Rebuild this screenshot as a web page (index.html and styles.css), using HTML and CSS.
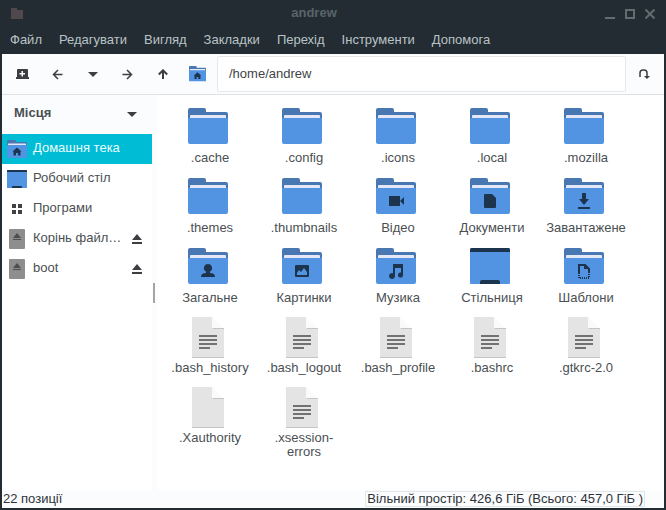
FILE: index.html
```html
<!DOCTYPE html>
<html lang="uk">
<head>
<meta charset="utf-8">
<title>andrew</title>
<link rel="stylesheet" href="styles.css">
</head>
<body>
<svg class="defs" aria-hidden="true">
  <symbol id="folder" viewBox="0 0 40 42">
    <path fill="#4877b1" d="M0 14V4a2 2 0 0 1 2-2h14a2 2 0 0 1 2 2v2h20a2 2 0 0 1 2 2v8H0z"/>
    <path fill="#e4e8f6" d="M2 18v-8a1 1 0 0 1 1-1h34a1 1 0 0 1 1 1v8z"/>
    <path fill="#5294e2" d="M0 12h40v24a2 2 0 0 1-2 2H2a2 2 0 0 1-2-2z"/>
  </symbol>
  <symbol id="desktop" viewBox="0 0 40 42">
    <rect y="2" width="40" height="36" rx="1" fill="#5294e2"/>
    <path fill="#1d344f" d="M0 6V4a2 2 0 0 1 2-2h36a2 2 0 0 1 2 2v2zM10 38v-2a2 2 0 0 1 2-2h16a2 2 0 0 1 2 2v2z"/>
  </symbol>
  <symbol id="file" viewBox="0 0 40 42">
    <path fill="#e4e4e4" d="M4 1h20v12h12v28H4z"/>
    <path fill="#fafafa" d="M24 1l12 12H24z"/>
    <path fill="#c4c4c4" d="M24 12h12v1H25zM4 41h32v1H4z"/>
  </symbol>
  <symbol id="text" viewBox="0 0 40 42">
    <use href="#file" width="40" height="42"/>
    <path fill="#727272" d="M11 19h18v2H11zM11 23h18v2H11zM11 27h18v2H11zM11 31h11v2H11z"/>
  </symbol>
  <symbol id="drive" viewBox="0 0 16 20">
    <rect width="16" height="20" rx="1" fill="#8e8e8e"/>
    <path fill="#4d4d4d" d="M8 4l4 5H4zM4 10h8v1H4z"/>
  </symbol>
  <symbol id="eject" viewBox="0 0 10 10">
    <path d="M5 0l5 6H0zM0 8h10v2H0z"/>
  </symbol>
  <symbol id="caret" viewBox="0 0 10 5"><path d="M0 0h10L5 5z"/></symbol>
  <symbol id="home" viewBox="0 0 40 42">
    <use href="#folder" width="40" height="42"/>
    <path fill="#1d344f" d="M20 17l9 8h-2v8h-5v-5h-4v5h-5v-8h-2z"/>
  </symbol>
</svg>
<div class="window">
  <header class="titlebar">
    <svg class="app-icon" viewBox="0 0 12 11"><path d="M0 1V0h6v2h6v9H0z"/></svg>
    <h1>andrew</h1>
    <div class="controls">
      <button aria-label="Згорнути"><svg viewBox="0 0 10 10"><path d="M0 9h10"/></svg></button>
      <button aria-label="Розгорнути"><svg viewBox="0 0 10 10"><path d="M1 1h8v8H1z"/></svg></button>
      <button aria-label="Закрити"><svg viewBox="0 0 10 10"><path d="M.5.5l9 9M9.500.5l-9 9"/></svg></button>
    </div>
  </header>
  <nav class="menubar">
    <button>Файл</button><button>Редагувати</button><button>Вигляд</button><button>Закладки</button><button>Перехід</button><button>Інструменти</button><button>Допомога</button>
  </nav>
  <main class="body">
    <div class="toolbar">
      <button aria-label="Нова вкладка"><svg width="13" height="10" viewBox="0 0 13 10"><path fill-rule="evenodd" d="M1 1q0-1 1-1h9q1 0 1 1v7h1v2H0V8h1zM5.500 2v2h-2v1.500h2v2H7v-2h2V4H7V2z"/></svg></button>
      <button aria-label="Назад"><svg class="line" width="11" height="11" viewBox="0 0 11 11"><path d="M10.500 5.500H1.500M6 1L1.500 5.500 6 10"/></svg></button>
      <button aria-label="Історія"><svg width="10" height="5"><use href="#caret"/></svg></button>
      <button aria-label="Вперед"><svg class="line" width="11" height="11" viewBox="0 0 11 11"><path d="M.5 5.500h9M5 1l4.500 4.500L5 10"/></svg></button>
      <button aria-label="Вгору"><svg class="line up" width="10" height="10" viewBox="0 0 10 10"><path d="M5 10V1.500M.8 5.500L5 1.300l4.200 4.200"/></svg></button>
      <button aria-label="Домашня тека"><svg width="17" height="18"><use href="#home"/></svg></button>
      <input type="text" value="/home/andrew" aria-label="Шлях">
      <button aria-label="Перейти"><svg class="line" width="12" height="12" viewBox="0 0 12 12"><path d="M2 9V5a3 3 0 0 1 3-3h1a3 3 0 0 1 3 3v4"/><path class="tip" d="M6 8h6l-3 3z"/></svg></button>
    </div>
    <div class="panes">
      <aside class="sidebar">
        <button class="places"><span>Місця</span><svg width="10" height="5"><use href="#caret"/></svg></button>
        <ul>
          <li class="selected"><svg class="icon" width="20" height="21"><use href="#home"/></svg><a href="#">Домашня тека</a></li>
          <li><svg class="icon" width="20" height="21"><use href="#desktop"/></svg><a href="#">Робочий стіл</a></li>
          <li><svg class="icon" width="20" height="20" viewBox="0 0 20 20"><path fill="#424242" d="M5 5h4v4H5zM11 5h4v4h-4zM5 11h4v4H5zM11 11h4v4h-4z"/></svg><a href="#">Програми</a></li>
          <li><svg class="icon" width="20" height="20"><use href="#drive"/></svg><a href="#">Корінь файл…</a><button aria-label="Вийняти"><svg width="10" height="10"><use href="#eject"/></svg></button></li>
          <li><svg class="icon" width="20" height="20"><use href="#drive"/></svg><a href="#">boot</a><button aria-label="Вийняти"><svg width="10" height="10"><use href="#eject"/></svg></button></li>
        </ul>
      </aside>
      <div class="splitter"><span></span></div>
      <section class="files">
        <a href="#"><svg viewBox="0 0 40 42"><use href="#folder"/></svg><span>.cache</span></a>
        <a href="#"><svg viewBox="0 0 40 42"><use href="#folder"/></svg><span>.config</span></a>
        <a href="#"><svg viewBox="0 0 40 42"><use href="#folder"/></svg><span>.icons</span></a>
        <a href="#"><svg viewBox="0 0 40 42"><use href="#folder"/></svg><span>.local</span></a>
        <a href="#"><svg viewBox="0 0 40 42"><use href="#folder"/></svg><span>.mozilla</span></a>
        <a href="#"><svg viewBox="0 0 40 42"><use href="#folder"/></svg><span>.themes</span></a>
        <a href="#"><svg viewBox="0 0 40 42"><use href="#folder"/></svg><span>.thumbnails</span></a>
        <a href="#"><svg viewBox="0 0 40 42"><use href="#folder"/><path class="mark" d="M13 20h11v10H13zM24 25l4-4v8z"/></svg><span>Відео</span></a>
        <a href="#"><svg viewBox="0 0 40 42"><use href="#folder"/><path class="mark" d="M15 18h7l4 4v9a1 1 0 0 1-1 1H15a1 1 0 0 1-1-1V19a1 1 0 0 1 1-1z"/></svg><span>Документи</span></a>
        <a href="#"><svg viewBox="0 0 40 42"><use href="#folder"/><path class="mark" d="M18 17h4v6h3l-5 6-5-6h3zM14 31h12v2H14z"/></svg><span>Завантажене</span></a>
        <a href="#"><svg viewBox="0 0 40 42"><use href="#folder"/><path class="mark" d="M20 18a4 4 0 0 1 2 7.500V27q5 0 5 4H13q0-4 5-4v-1.500A4 4 0 0 1 20 18z"/></svg><span>Загальне</span></a>
        <a href="#"><svg viewBox="0 0 40 42"><use href="#folder"/><path class="mark" fill-rule="evenodd" d="M14 19h12a1 1 0 0 1 1 1v10a1 1 0 0 1-1 1H14a1 1 0 0 1-1-1V20a1 1 0 0 1 1-1zM15 29h10v-3l-3-4-3 4-2-2-2 3z"/></svg><span>Картинки</span></a>
        <a href="#"><svg viewBox="0 0 40 42"><use href="#folder"/><path class="mark" d="M17 18h10v11a2.500 2.500 0 1 1-2-2.400V22h-6v8a3 3 0 1 1-2-2.800z"/></svg><span>Музика</span></a>
        <a href="#"><svg viewBox="0 0 40 42"><use href="#desktop"/></svg><span>Стільниця</span></a>
        <a href="#"><svg viewBox="0 0 40 42"><use href="#folder"/><path class="outline" d="M15 27v-8h6l4 4v4"/><path class="mark" d="M20 19h2l3 3v1h-5z"/><path class="outline dashed" d="M15 27v5h10v-5"/></svg><span>Шаблони</span></a>
        <a href="#"><svg viewBox="0 0 40 42"><use href="#text"/></svg><span>.bash_history</span></a>
        <a href="#"><svg viewBox="0 0 40 42"><use href="#text"/></svg><span>.bash_logout</span></a>
        <a href="#"><svg viewBox="0 0 40 42"><use href="#text"/></svg><span>.bash_profile</span></a>
        <a href="#"><svg viewBox="0 0 40 42"><use href="#text"/></svg><span>.bashrc</span></a>
        <a href="#"><svg viewBox="0 0 40 42"><use href="#text"/></svg><span>.gtkrc-2.0</span></a>
        <a href="#"><svg viewBox="0 0 40 42"><use href="#file"/></svg><span>.Xauthority</span></a>
        <a href="#"><svg viewBox="0 0 40 42"><use href="#text"/></svg><span>.xsession-<br>errors</span></a>
      </section>
    </div>
    <footer class="status">
      <span>22 позиції</span>
      <span class="space">Вільний простір: 426,6 ГіБ (Всього: 457,0 ГіБ )</span>
    </footer>
  </main>
</div>
</body>
</html>
```
FILE: styles.css
```css
* { box-sizing: border-box; }

body {
  margin: 0;
  font: 13px/14px "Liberation Sans", Arial, sans-serif;
  color: #4a4f52;
}

button {
  padding: 0;
  border: 0;
  background: none;
  font: inherit;
  color: inherit;
}

a { color: inherit; text-decoration: none; }
ul { list-style: none; margin: 0; padding: 0; }
svg { display: block; flex: none; fill: #3c3e42; }
.defs { position: absolute; width: 0; height: 0; }

.window {
  display: flex;
  flex-direction: column;
  min-height: 100vh;
  padding: 0 2px 2px;
  background: #232c32;
}

.titlebar {
  display: flex;
  align-items: center;
  height: 27px;
  padding: 0 9px;
}
.titlebar h1 {
  flex: 1;
  margin: 0;
  padding-bottom: 2px;
  font-size: 13px;
  text-align: center;
  color: #59646a;
}
.app-icon { width: 12px; height: 11px; fill: #50484d; }
.controls {
  display: flex;
  justify-content: flex-end;
  gap: 10px;
}
.controls svg {
  width: 10px;
  height: 10px;
  fill: none;
  stroke: #626c71;
  stroke-width: 2;
}

.menubar {
  display: flex;
  gap: 17px;
  height: 27px;
  padding: 0 8px 2px;
  color: #b9c3c7;
}

.body {
  display: flex;
  flex: 1;
  flex-direction: column;
  background: #fff;
}

.toolbar {
  display: flex;
  height: 41px;
  padding: 2px 3px 2px 3px;
  border-bottom: 1px solid #dfe2e4;
  background: #fbfcfe;
}
.toolbar button {
  display: flex;
  flex: none;
  align-items: center;
  justify-content: center;
  width: 35px;
}
.toolbar input {
  flex: 1;
  min-width: 0;
  margin-left: 2px;
  padding: 0 11px;
  border: 1px solid #e6e8ea;
  border-radius: 2px;
  background: #fff;
  font: inherit;
  color: #3f4447;
}
.line { fill: none; stroke: #3c3e42; stroke-width: 1.5; }
.up { stroke-width: 2; }
.tip { fill: #3c3e42; stroke: none; }

.panes { display: flex; flex: 1; }

.sidebar { flex: none; width: 150px; }
.places {
  display: flex;
  align-items: center;
  justify-content: space-between;
  width: 100%;
  height: 39px;
  padding: 0 15px 4px 12px;
  background: #fbfcfe;
  font-weight: bold;
}
.places svg { margin-top: 4px; }
.sidebar li {
  display: flex;
  align-items: center;
  gap: 6px;
  height: 30px;
  padding: 0 10px 0 5px;
}
.sidebar li a {
  flex: 1;
  padding-bottom: 2px;
  line-height: 16px;
  white-space: nowrap;
}
.sidebar .selected { background: #00bcd4; color: #e9fbfd; }

.splitter {
  display: flex;
  align-items: center;
  width: 6px;
  background: #fbfcfe;
}
.splitter span { width: 2px; height: 20px; margin-left: 1px; background: #a3a5a7; }

.files {
  display: grid;
  flex: 1;
  grid-template-columns: repeat(auto-fill, 94px);
  grid-auto-rows: 70px;
  align-content: start;
  padding: 9px 3px;
}
.files a {
  display: flex;
  flex-direction: column;
  align-items: center;
  gap: 3px;
  padding-top: 2px;
  text-align: center;
}
.files svg { width: 40px; height: 42px; }
.files span { padding-left: 4px; }
.files .mark { fill: #1d344f; }
.outline { fill: none; stroke: #1d344f; stroke-width: 2; }
.dashed { stroke-dasharray: 1 1; }

.status {
  display: flex;
  align-items: center;
  justify-content: space-between;
  height: 18px;
  padding: 0 19px 0 1px;
  background: #fbfcfe;
  color: #2f3336;
}
.space { padding: 0 1px; border: 1px solid #e3e6e6; }
```
